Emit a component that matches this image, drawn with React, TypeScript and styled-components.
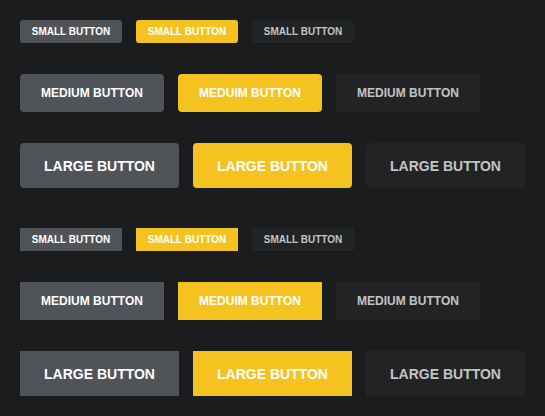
import React from "react";
import styled, { createGlobalStyle, css } from "styled-components";

const Global = createGlobalStyle`
  html, body { margin: 0; padding: 0; background: #1b1c1e; }
  body { font-family: "Liberation Sans", Arial, Helvetica, sans-serif; }
`;

type Size = "small" | "medium" | "large";
type Variant = "gray" | "yellow" | "dark";

const sizes = {
  small: css`width: 102px; height: 23px; font-size: 10px; border-radius: 3px;`,
  medium: css`width: 144px; height: 38px; font-size: 12px; border-radius: 4px;`,
  large: css`width: 159px; height: 45px; font-size: 14px; border-radius: 4px;`,
};

const variants = {
  gray: css`background: #505357; color: #ffffff;`,
  yellow: css`background: #f5c31f; color: #ffffff;`,
  dark: css`background: #222325; color: #c3c3c3;`,
};

const Page = styled.div`
  padding: 20px;
  display: flex;
  flex-direction: column;
  gap: 40px;
`;

const Section = styled.div`
  display: flex;
  flex-direction: column;
  gap: 31px;
`;

const Row = styled.div`
  display: flex;
  gap: 14px;
`;

const Button = styled.button<{ $size: Size; $variant: Variant; $square?: boolean }>`
  display: flex;
  align-items: center;
  justify-content: center;
  border: none;
  padding: 0;
  margin: 0;
  font-family: "Liberation Sans", Arial, Helvetica, sans-serif;
  font-weight: 700;
  text-transform: uppercase;
  white-space: nowrap;
  cursor: pointer;
  ${(p) => sizes[p.$size]}
  ${(p) => variants[p.$variant]}
  ${(p) => p.$square && css`border-radius: 0;`}
`;

const rows: { size: Size; labels: [string, string, string] }[] = [
  { size: "small", labels: ["Small Button", "Small Button", "Small Button"] },
  { size: "medium", labels: ["Medium Button", "Meduim Button", "Medium Button"] },
  { size: "large", labels: ["Large Button", "Large Button", "Large Button"] },
];

const variantOrder: Variant[] = ["gray", "yellow", "dark"];

function ButtonSet({ square }: { square?: boolean }) {
  return (
    <Section>
      {rows.map((r) => (
        <Row key={r.size}>
          {r.labels.map((l, i) => (
            <Button key={i} $size={r.size} $variant={variantOrder[i]} $square={square}>
              {l}
            </Button>
          ))}
        </Row>
      ))}
    </Section>
  );
}

export default function App() {
  return (
    <>
      <Global />
      <Page>
        <ButtonSet />
        <ButtonSet square />
      </Page>
    </>
  );
}
